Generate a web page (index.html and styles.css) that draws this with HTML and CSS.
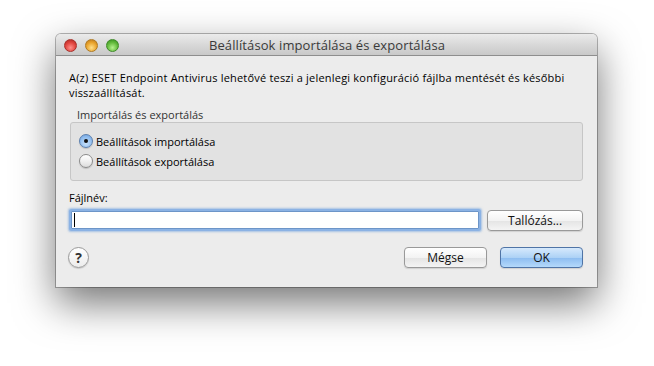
FILE: index.html
```html
<!DOCTYPE html>
<html lang="hu">
<head>
    <meta charset="UTF-8">
    <meta name="viewport" content="width=device-width, initial-scale=1.0">
    <title>Beállítások importálása és exportálása</title>
    <link rel="stylesheet" href="styles.css">
</head>
<body>
    <!-- Dialog window -->
    <div class="window">
        <div class="titlebar">
            <div class="lights">
                <span class="light red"></span>
                <span class="light yellow"></span>
                <span class="light green"></span>
            </div>
            <div class="title">Beállítások importálása és exportálása</div>
        </div>

        <div class="content">
            <p class="desc">A(z) ESET Endpoint Antivirus lehetővé teszi a jelenlegi konfiguráció fájlba mentését és későbbi visszaállítását.</p>

            <div class="group-label">Importálás és exportálás</div>
            <div class="group">
                <label class="radio-row">
                    <span class="radio checked"></span>
                    <span>Beállítások importálása</span>
                </label>
                <label class="radio-row">
                    <span class="radio"></span>
                    <span>Beállítások exportálása</span>
                </label>
            </div>

            <div class="field-label">Fájlnév:</div>
            <div class="file-row">
                <div class="textfield"><span class="caret"></span></div>
                <button class="btn browse">Tallózás...</button>
            </div>

            <div class="footer">
                <span class="help">?</span>
                <div class="actions">
                    <button class="btn cancel">Mégse</button>
                    <button class="btn primary">OK</button>
                </div>
            </div>
        </div>
    </div>
</body>
</html>
```

FILE: styles.css
```css
/* General */
html, body {
    margin: 0;
    min-height: 100vh;
    background: #ffffff;
}

body {
    font-family: "Open Sans", "Liberation Sans", sans-serif;
    font-size: 11px;
    color: #000;
    padding-top: 34px;
    box-sizing: border-box;
}

/* Window */
.window {
    margin-left: 56px;
    width: 541px;
    height: 253px;
    background: #ececec;
    border-radius: 5px 5px 0 0;
    box-shadow: 0 0 0 1px rgba(0, 0, 0, 0.28), 0 16px 40px rgba(0, 0, 0, 0.55);
    display: flex;
    flex-direction: column;
}

/* Title bar */
.titlebar {
    height: 21px;
    border-bottom: 1px solid #8e8e8e;
    border-radius: 5px 5px 0 0;
    background: linear-gradient(#ebebeb, #d5d5d5 60%, #c9c9c9);
    display: flex;
    align-items: center;
    position: relative;
}

.lights {
    display: flex;
    gap: 8px;
    padding-left: 8px;
    position: absolute;
    top: 5px;
    left: 0;
}

.light {
    width: 13px;
    height: 13px;
    border-radius: 50%;
    box-sizing: border-box;
}

.light.red {
    background: radial-gradient(circle at 50% 70%, #ff8f8a, #e0443e 55%, #a52520);
    border: 1px solid #a8302b;
}

.light.yellow {
    background: radial-gradient(circle at 50% 70%, #ffe08a, #e9a32c 55%, #b3731c);
    border: 1px solid #b07a22;
}

.light.green {
    background: radial-gradient(circle at 50% 70%, #b6f28f, #63ba3c 55%, #2f8a1b);
    border: 1px solid #3e8a28;
}

.title {
    flex: 1;
    text-align: center;
    font-size: 13px;
    color: #3a3a3a;
    padding-left: 1px;
    letter-spacing: 0.1px;
}

/* Content */
.content {
    flex: 1;
    padding: 14px 14px 0 13px;
    display: flex;
    flex-direction: column;
}

.desc {
    margin: 0;
    line-height: 15px;
    width: 514px;
    letter-spacing: 0.2px;
}

.group-label {
    margin-top: 7px;
    margin-left: 8px;
    line-height: 15px;
    color: #333;
}

.group {
    margin-left: 1px;
    background: #e2e2e2;
    border: 1px solid #c6c6c6;
    border-radius: 3px;
    padding: 8px 0 9px;
}

.radio-row {
    display: flex;
    align-items: center;
    height: 20px;
    padding-left: 8px;
    gap: 3px;
}

.radio {
    width: 14px;
    height: 14px;
    box-sizing: border-box;
    border-radius: 50%;
    border: 1px solid #8b8b8b;
    background: linear-gradient(#ffffff, #f0f0f0 50%, #dcdcdc);
    box-shadow: 0 1px 1px rgba(0, 0, 0, 0.15);
    display: flex;
    align-items: center;
    justify-content: center;
}

.radio.checked {
    border-color: #5b7fae;
    background: radial-gradient(circle at 50% 70%, #c9e2fb, #8fbcee 60%, #6b9fdc);
}

.radio.checked::after {
    content: "";
    width: 4px;
    height: 4px;
    border-radius: 50%;
    background: #111;
}

.field-label {
    margin-top: 9px;
    line-height: 15px;
}

/* File row */
.file-row {
    margin-top: 4px;
    display: flex;
    align-items: center;
    height: 22px;
}

.textfield {
    margin-left: 2px;
    width: 405px;
    height: 16px;
    background: #fff;
    border: 1px solid #6d95c8;
    box-shadow: 0 0 0 2px #8bb2e4, 0 0 2px 3px rgba(110, 160, 220, 0.55);
    border-radius: 1px;
    display: flex;
    align-items: center;
    padding-left: 2px;
}

.caret {
    width: 1px;
    height: 14px;
    background: #000;
}

.btn {
    font-family: inherit;
    font-size: 12px;
    height: 21px;
    padding: 0;
    border: 1px solid #999;
    border-radius: 4px;
    background: linear-gradient(#ffffff, #f3f3f3 50%, #e4e4e4 51%, #f4f4f4);
    box-shadow: 0 1px 1px rgba(0, 0, 0, 0.12);
    color: #111;
}

.browse {
    margin-left: 8px;
    width: 96px;
}

/* Footer */
.footer {
    margin-top: 16px;
    display: flex;
    align-items: center;
    justify-content: space-between;
}

.help {
    width: 21px;
    height: 21px;
    box-sizing: border-box;
    margin-left: -1px;
    border-radius: 50%;
    border: 1px solid #9a9a9a;
    background: linear-gradient(#ffffff, #ececec);
    box-shadow: 0 1px 1px rgba(0, 0, 0, 0.15);
    font-size: 14px;
    font-weight: bold;
    color: #333;
    display: flex;
    align-items: center;
    justify-content: center;
}

.actions {
    display: flex;
    gap: 13px;
}

.cancel {
    width: 83px;
}

.primary {
    width: 83px;
    border-color: #4f74a6;
    background: linear-gradient(#d6e9fc, #add2f6 50%, #8cbcf0 51%, #b4d9fb);
}
```
